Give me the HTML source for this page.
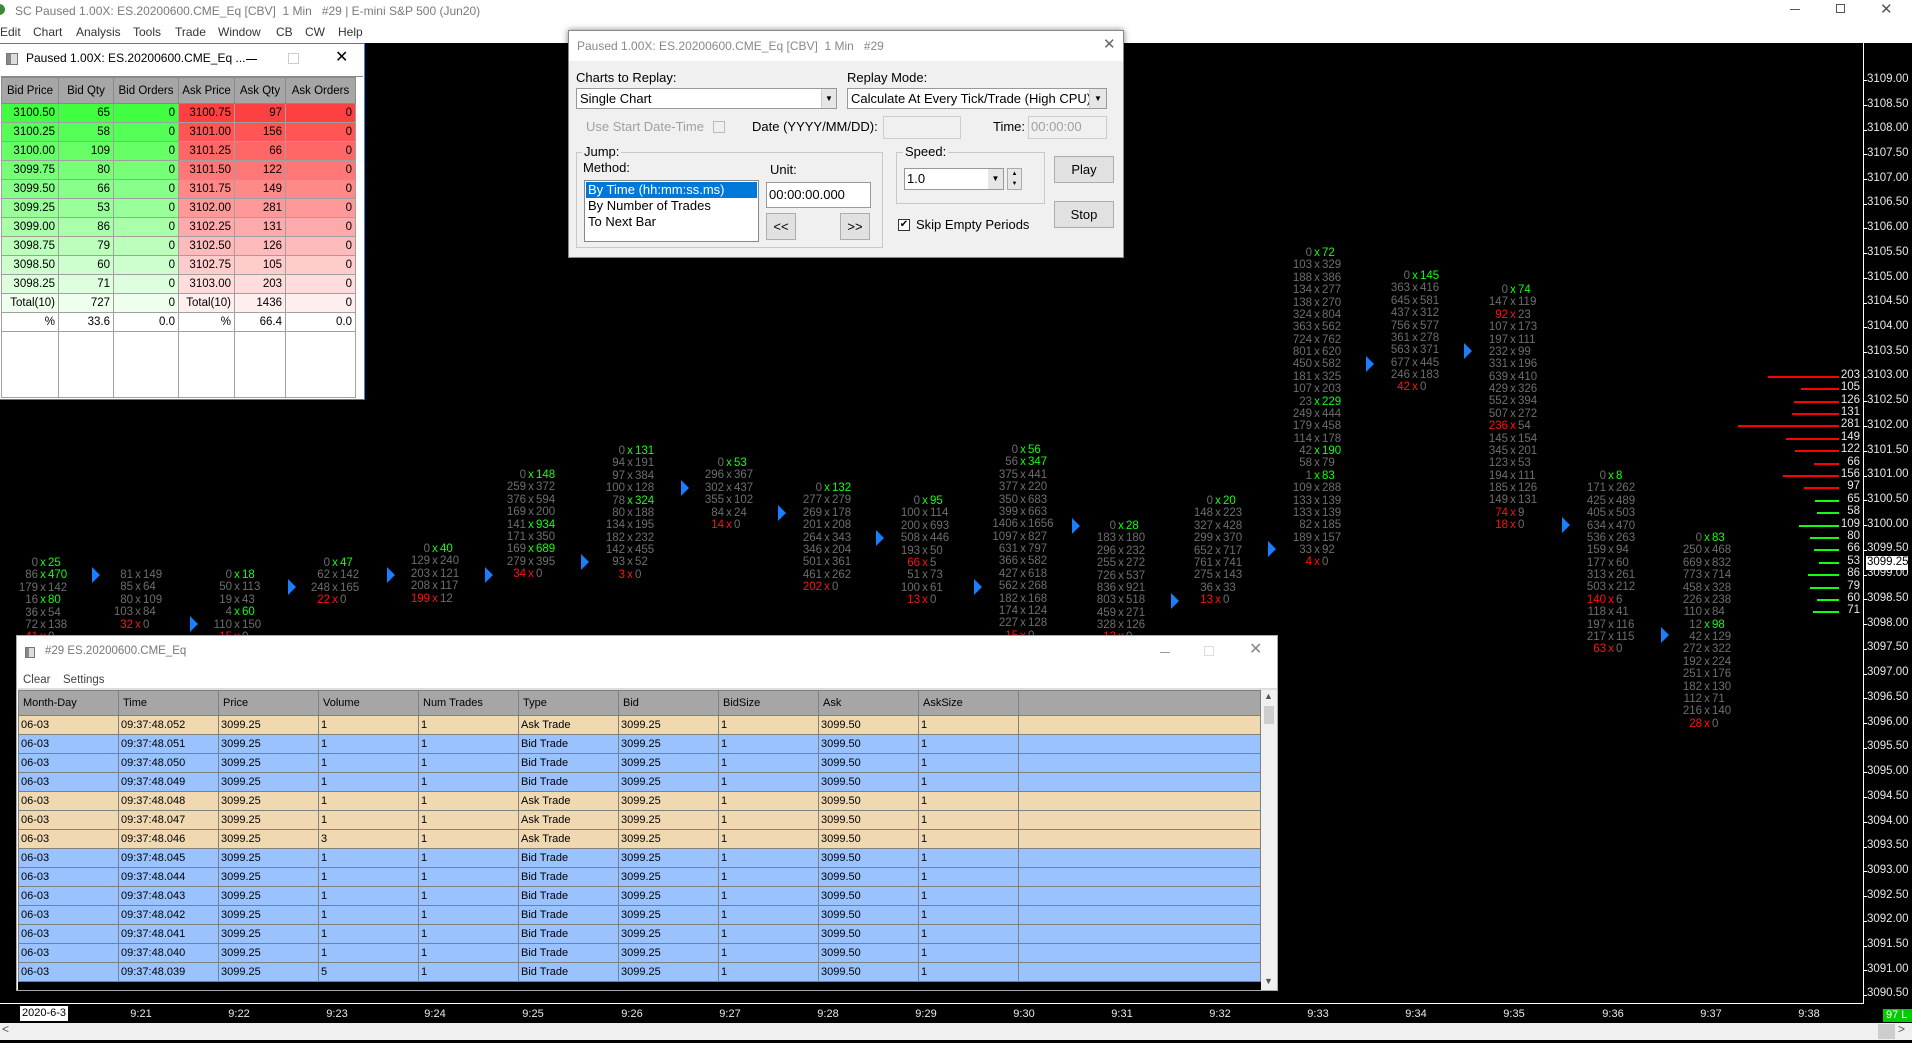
<!DOCTYPE html>
<html><head><meta charset="utf-8"><style>
*{box-sizing:border-box}
body{margin:0;width:1912px;height:1043px;overflow:hidden;background:#000;font-family:"Liberation Sans",sans-serif;position:relative}
.abs{position:absolute}
.col{position:absolute;font-size:11.5px;color:#6e6e6e;line-height:12.375px}
.col p{margin:0;height:12.375px;white-space:nowrap}
.col a{display:inline-block;width:40px;text-align:right}
.col b{display:inline-block;width:10px;text-align:center;font-weight:normal}
.col s{text-decoration:none}
.g b,.g s{color:#1f1}
.r a,.r b{color:#f11}
.arr{position:absolute;width:0;height:0;border-top:8px solid transparent;border-bottom:8px solid transparent;border-left:8px solid #1a7fff}
.pl{position:absolute;left:1867px;font-size:11.5px;color:#e8e8e8}
.tk{position:absolute;left:1863px;width:4px;height:1px;background:#fff}
.bar{position:absolute;height:2px}
.bn{position:absolute;width:40px;text-align:right;font-size:11.5px;color:#e8e8e8;left:1820px}
.ta{position:absolute;top:1008px;font-size:11px;color:#e8e8e8;width:40px;text-align:center}
table{border-collapse:collapse;table-layout:fixed}
.dom td{height:19px;border:1px solid #a0a0a0;font-size:11.5px;text-align:right;padding:0 3px;white-space:nowrap}
.dom th{height:26px;border:1px solid #8a8a8a;font-size:11.5px;font-weight:normal;background:#a6a6a6;padding:0 2px;white-space:nowrap}
.ts td{height:19px;border:1px solid #808080;font-size:11px;padding:0 2px;white-space:nowrap;overflow:hidden}
.ts th{height:25px;border:1px solid #808080;font-size:11px;font-weight:normal;background:#a6a6a6;text-align:left;padding:0 4px;white-space:nowrap}
.a td{background:#f0d8b0}.bd td{background:#99c2ff}
.btn{position:absolute;background:#e1e1e1;border:1px solid #adadad;font-size:13px;text-align:center}
.dl{position:absolute;font-size:13px;color:#000;white-space:nowrap}
.mn{position:absolute}
</style></head><body>

<!-- top title/menu -->
<div class="abs" style="left:0;top:0;width:1912px;height:43px;background:#fff"></div>
<div class="abs" style="left:-6px;top:4px;width:11px;height:11px;border-radius:50%;background:#3a8a3a"></div>
<div class="abs" style="left:15px;top:4px;font-size:12px;color:#7a7a7a;white-space:nowrap">SC Paused 1.00X: ES.20200600.CME_Eq [CBV]&nbsp; 1 Min &nbsp; #29 | E-mini S&amp;P 500 (Jun20)</div>
<div class="abs" style="left:1790px;top:9px;width:10px;height:1px;background:#555"></div>
<div class="abs" style="left:1836px;top:4px;width:9px;height:9px;border:1px solid #555"></div>
<div class="abs" style="left:1880px;top:0px;font-size:15px;color:#555">✕</div>
<div class="abs" style="left:0;top:25px;font-size:12px;color:#333;white-space:nowrap">
<span class="mn" style="left:0">Edit</span><span class="mn" style="left:33px">Chart</span><span class="mn" style="left:76px">Analysis</span><span class="mn" style="left:133px">Tools</span><span class="mn" style="left:175px">Trade</span><span class="mn" style="left:218px">Window</span><span class="mn" style="left:276px">CB</span><span class="mn" style="left:305px">CW</span><span class="mn" style="left:338px">Help</span></div>

<!-- price axis -->
<div class="abs" style="left:1863px;top:43px;width:1px;height:961px;background:#fff"></div>
<div class="tk" style="top:80px"></div><div class="pl" style="top:73px">3109.00</div>
<div class="tk" style="top:105px"></div><div class="pl" style="top:98px">3108.50</div>
<div class="tk" style="top:130px"></div><div class="pl" style="top:122px">3108.00</div>
<div class="tk" style="top:154px"></div><div class="pl" style="top:147px">3107.50</div>
<div class="tk" style="top:179px"></div><div class="pl" style="top:172px">3107.00</div>
<div class="tk" style="top:204px"></div><div class="pl" style="top:196px">3106.50</div>
<div class="tk" style="top:228px"></div><div class="pl" style="top:221px">3106.00</div>
<div class="tk" style="top:253px"></div><div class="pl" style="top:246px">3105.50</div>
<div class="tk" style="top:278px"></div><div class="pl" style="top:271px">3105.00</div>
<div class="tk" style="top:303px"></div><div class="pl" style="top:295px">3104.50</div>
<div class="tk" style="top:327px"></div><div class="pl" style="top:320px">3104.00</div>
<div class="tk" style="top:352px"></div><div class="pl" style="top:345px">3103.50</div>
<div class="tk" style="top:377px"></div><div class="pl" style="top:369px">3103.00</div>
<div class="tk" style="top:401px"></div><div class="pl" style="top:394px">3102.50</div>
<div class="tk" style="top:426px"></div><div class="pl" style="top:419px">3102.00</div>
<div class="tk" style="top:451px"></div><div class="pl" style="top:444px">3101.50</div>
<div class="tk" style="top:476px"></div><div class="pl" style="top:468px">3101.00</div>
<div class="tk" style="top:500px"></div><div class="pl" style="top:493px">3100.50</div>
<div class="tk" style="top:525px"></div><div class="pl" style="top:518px">3100.00</div>
<div class="tk" style="top:550px"></div><div class="pl" style="top:542px">3099.50</div>
<div class="tk" style="top:575px"></div><div class="pl" style="top:567px">3099.00</div>
<div class="abs" style="left:1866px;top:556px;width:42px;height:14px;background:#fff;color:#000;font-size:11.5px;padding-left:1px">3099.25</div>
<div class="tk" style="top:599px"></div><div class="pl" style="top:592px">3098.50</div>
<div class="tk" style="top:624px"></div><div class="pl" style="top:617px">3098.00</div>
<div class="tk" style="top:649px"></div><div class="pl" style="top:641px">3097.50</div>
<div class="tk" style="top:674px"></div><div class="pl" style="top:666px">3097.00</div>
<div class="tk" style="top:698px"></div><div class="pl" style="top:691px">3096.50</div>
<div class="tk" style="top:723px"></div><div class="pl" style="top:716px">3096.00</div>
<div class="tk" style="top:748px"></div><div class="pl" style="top:740px">3095.50</div>
<div class="tk" style="top:772px"></div><div class="pl" style="top:765px">3095.00</div>
<div class="tk" style="top:797px"></div><div class="pl" style="top:790px">3094.50</div>
<div class="tk" style="top:822px"></div><div class="pl" style="top:815px">3094.00</div>
<div class="tk" style="top:847px"></div><div class="pl" style="top:839px">3093.50</div>
<div class="tk" style="top:871px"></div><div class="pl" style="top:864px">3093.00</div>
<div class="tk" style="top:896px"></div><div class="pl" style="top:889px">3092.50</div>
<div class="tk" style="top:921px"></div><div class="pl" style="top:913px">3092.00</div>
<div class="tk" style="top:946px"></div><div class="pl" style="top:938px">3091.50</div>
<div class="tk" style="top:970px"></div><div class="pl" style="top:963px">3091.00</div>
<div class="tk" style="top:995px"></div><div class="pl" style="top:987px">3090.50</div>

<!-- DOM bars -->
<div class="bar" style="background:#f00;top:376px;left:1768px;width:71px"></div><div class="bn" style="top:369px">203</div>
<div class="bar" style="background:#f00;top:388px;left:1801px;width:38px"></div><div class="bn" style="top:381px">105</div>
<div class="bar" style="background:#f00;top:401px;left:1794px;width:45px"></div><div class="bn" style="top:394px">126</div>
<div class="bar" style="background:#f00;top:413px;left:1792px;width:47px"></div><div class="bn" style="top:406px">131</div>
<div class="bar" style="background:#f00;top:425px;left:1738px;width:101px"></div><div class="bn" style="top:418px">281</div>
<div class="bar" style="background:#f00;top:438px;left:1786px;width:53px"></div><div class="bn" style="top:431px">149</div>
<div class="bar" style="background:#f00;top:450px;left:1795px;width:44px"></div><div class="bn" style="top:443px">122</div>
<div class="bar" style="background:#f00;top:463px;left:1814px;width:25px"></div><div class="bn" style="top:456px">66</div>
<div class="bar" style="background:#f00;top:475px;left:1783px;width:56px"></div><div class="bn" style="top:468px">156</div>
<div class="bar" style="background:#f00;top:487px;left:1804px;width:35px"></div><div class="bn" style="top:480px">97</div>
<div class="bar" style="background:#1f1;top:500px;left:1815px;width:24px"></div><div class="bn" style="top:493px">65</div>
<div class="bar" style="background:#1f1;top:512px;left:1817px;width:22px"></div><div class="bn" style="top:505px">58</div>
<div class="bar" style="background:#1f1;top:525px;left:1799px;width:40px"></div><div class="bn" style="top:518px">109</div>
<div class="bar" style="background:#1f1;top:537px;left:1810px;width:29px"></div><div class="bn" style="top:530px">80</div>
<div class="bar" style="background:#1f1;top:549px;left:1814px;width:25px"></div><div class="bn" style="top:542px">66</div>
<div class="bar" style="background:#1f1;top:562px;left:1819px;width:20px"></div><div class="bn" style="top:555px">53</div>
<div class="bar" style="background:#1f1;top:574px;left:1808px;width:31px"></div><div class="bn" style="top:567px">86</div>
<div class="bar" style="background:#1f1;top:587px;left:1810px;width:29px"></div><div class="bn" style="top:580px">79</div>
<div class="bar" style="background:#1f1;top:599px;left:1817px;width:22px"></div><div class="bn" style="top:592px">60</div>
<div class="bar" style="background:#1f1;top:611px;left:1813px;width:26px"></div><div class="bn" style="top:604px">71</div>

<!-- footprint columns -->
<div class="col" style="left:-2px;top:557px"><p class="g"><a>0</a><b>x</b><s>25</s></p><p class="g"><a>86</a><b>x</b><s>470</s></p><p><a>179</a><b>x</b><s>142</s></p><p class="g"><a>16</a><b>x</b><s>80</s></p><p><a>36</a><b>x</b><s>54</s></p><p><a>72</a><b>x</b><s>138</s></p><p class="r"><a>41</a><b>x</b><s>0</s></p></div>
<div class="col" style="left:93px;top:569px"><p><a>81</a><b>x</b><s>149</s></p><p><a>85</a><b>x</b><s>64</s></p><p><a>80</a><b>x</b><s>109</s></p><p><a>103</a><b>x</b><s>84</s></p><p class="r"><a>32</a><b>x</b><s>0</s></p></div>
<div class="col" style="left:192px;top:569px"><p class="g"><a>0</a><b>x</b><s>18</s></p><p><a>50</a><b>x</b><s>113</s></p><p><a>19</a><b>x</b><s>43</s></p><p class="g"><a>4</a><b>x</b><s>60</s></p><p><a>110</a><b>x</b><s>150</s></p><p class="r"><a>15</a><b>x</b><s>0</s></p></div>
<div class="col" style="left:290px;top:557px"><p class="g"><a>0</a><b>x</b><s>47</s></p><p><a>62</a><b>x</b><s>142</s></p><p><a>248</a><b>x</b><s>165</s></p><p class="r"><a>22</a><b>x</b><s>0</s></p></div>
<div class="col" style="left:390px;top:543px"><p class="g"><a>0</a><b>x</b><s>40</s></p><p><a>129</a><b>x</b><s>240</s></p><p><a>203</a><b>x</b><s>121</s></p><p><a>208</a><b>x</b><s>117</s></p><p class="r"><a>199</a><b>x</b><s>12</s></p></div>
<div class="col" style="left:486px;top:469px"><p class="g"><a>0</a><b>x</b><s>148</s></p><p><a>259</a><b>x</b><s>372</s></p><p><a>376</a><b>x</b><s>594</s></p><p><a>169</a><b>x</b><s>200</s></p><p class="g"><a>141</a><b>x</b><s>934</s></p><p><a>171</a><b>x</b><s>350</s></p><p class="g"><a>169</a><b>x</b><s>689</s></p><p><a>279</a><b>x</b><s>395</s></p><p class="r"><a>34</a><b>x</b><s>0</s></p></div>
<div class="col" style="left:585px;top:445px"><p class="g"><a>0</a><b>x</b><s>131</s></p><p><a>94</a><b>x</b><s>191</s></p><p><a>97</a><b>x</b><s>384</s></p><p><a>100</a><b>x</b><s>128</s></p><p class="g"><a>78</a><b>x</b><s>324</s></p><p><a>80</a><b>x</b><s>188</s></p><p><a>134</a><b>x</b><s>195</s></p><p><a>182</a><b>x</b><s>232</s></p><p><a>142</a><b>x</b><s>455</s></p><p><a>93</a><b>x</b><s>52</s></p><p class="r"><a>3</a><b>x</b><s>0</s></p></div>
<div class="col" style="left:684px;top:457px"><p class="g"><a>0</a><b>x</b><s>53</s></p><p><a>296</a><b>x</b><s>367</s></p><p><a>302</a><b>x</b><s>437</s></p><p><a>355</a><b>x</b><s>102</s></p><p><a>84</a><b>x</b><s>24</s></p><p class="r"><a>14</a><b>x</b><s>0</s></p></div>
<div class="col" style="left:782px;top:482px"><p class="g"><a>0</a><b>x</b><s>132</s></p><p><a>277</a><b>x</b><s>279</s></p><p><a>269</a><b>x</b><s>178</s></p><p><a>201</a><b>x</b><s>208</s></p><p><a>264</a><b>x</b><s>343</s></p><p><a>346</a><b>x</b><s>204</s></p><p><a>501</a><b>x</b><s>361</s></p><p><a>461</a><b>x</b><s>262</s></p><p class="r"><a>202</a><b>x</b><s>0</s></p></div>
<div class="col" style="left:880px;top:495px"><p class="g"><a>0</a><b>x</b><s>95</s></p><p><a>100</a><b>x</b><s>114</s></p><p><a>200</a><b>x</b><s>693</s></p><p><a>508</a><b>x</b><s>446</s></p><p><a>193</a><b>x</b><s>50</s></p><p class="r"><a>66</a><b>x</b><s>5</s></p><p><a>51</a><b>x</b><s>73</s></p><p><a>100</a><b>x</b><s>61</s></p><p class="r"><a>13</a><b>x</b><s>0</s></p></div>
<div class="col" style="left:978px;top:444px"><p class="g"><a>0</a><b>x</b><s>56</s></p><p class="g"><a>56</a><b>x</b><s>347</s></p><p><a>375</a><b>x</b><s>441</s></p><p><a>377</a><b>x</b><s>220</s></p><p><a>350</a><b>x</b><s>683</s></p><p><a>399</a><b>x</b><s>663</s></p><p><a>1406</a><b>x</b><s>1656</s></p><p><a>1097</a><b>x</b><s>827</s></p><p><a>631</a><b>x</b><s>797</s></p><p><a>366</a><b>x</b><s>582</s></p><p><a>427</a><b>x</b><s>618</s></p><p><a>562</a><b>x</b><s>268</s></p><p><a>182</a><b>x</b><s>168</s></p><p><a>174</a><b>x</b><s>124</s></p><p><a>227</a><b>x</b><s>128</s></p><p class="r"><a>15</a><b>x</b><s>0</s></p></div>
<div class="col" style="left:1076px;top:520px"><p class="g"><a>0</a><b>x</b><s>28</s></p><p><a>183</a><b>x</b><s>180</s></p><p><a>296</a><b>x</b><s>232</s></p><p><a>255</a><b>x</b><s>272</s></p><p><a>726</a><b>x</b><s>537</s></p><p><a>836</a><b>x</b><s>921</s></p><p><a>803</a><b>x</b><s>518</s></p><p><a>459</a><b>x</b><s>271</s></p><p><a>328</a><b>x</b><s>126</s></p><p class="r"><a>13</a><b>x</b><s>0</s></p></div>
<div class="col" style="left:1173px;top:495px"><p class="g"><a>0</a><b>x</b><s>20</s></p><p><a>148</a><b>x</b><s>223</s></p><p><a>327</a><b>x</b><s>428</s></p><p><a>299</a><b>x</b><s>370</s></p><p><a>652</a><b>x</b><s>717</s></p><p><a>761</a><b>x</b><s>741</s></p><p><a>275</a><b>x</b><s>143</s></p><p><a>36</a><b>x</b><s>33</s></p><p class="r"><a>13</a><b>x</b><s>0</s></p></div>
<div class="col" style="left:1272px;top:247px"><p class="g"><a>0</a><b>x</b><s>72</s></p><p><a>103</a><b>x</b><s>329</s></p><p><a>188</a><b>x</b><s>386</s></p><p><a>134</a><b>x</b><s>277</s></p><p><a>138</a><b>x</b><s>270</s></p><p><a>324</a><b>x</b><s>804</s></p><p><a>363</a><b>x</b><s>562</s></p><p><a>724</a><b>x</b><s>762</s></p><p><a>801</a><b>x</b><s>620</s></p><p><a>450</a><b>x</b><s>582</s></p><p><a>181</a><b>x</b><s>325</s></p><p><a>107</a><b>x</b><s>203</s></p><p class="g"><a>23</a><b>x</b><s>229</s></p><p><a>249</a><b>x</b><s>444</s></p><p><a>179</a><b>x</b><s>458</s></p><p><a>114</a><b>x</b><s>178</s></p><p class="g"><a>42</a><b>x</b><s>190</s></p><p><a>58</a><b>x</b><s>79</s></p><p class="g"><a>1</a><b>x</b><s>83</s></p><p><a>109</a><b>x</b><s>288</s></p><p><a>133</a><b>x</b><s>139</s></p><p><a>133</a><b>x</b><s>139</s></p><p><a>82</a><b>x</b><s>185</s></p><p><a>189</a><b>x</b><s>157</s></p><p><a>33</a><b>x</b><s>92</s></p><p class="r"><a>4</a><b>x</b><s>0</s></p></div>
<div class="col" style="left:1370px;top:270px"><p class="g"><a>0</a><b>x</b><s>145</s></p><p><a>363</a><b>x</b><s>416</s></p><p><a>645</a><b>x</b><s>581</s></p><p><a>437</a><b>x</b><s>312</s></p><p><a>756</a><b>x</b><s>577</s></p><p><a>361</a><b>x</b><s>278</s></p><p><a>563</a><b>x</b><s>371</s></p><p><a>677</a><b>x</b><s>445</s></p><p><a>246</a><b>x</b><s>183</s></p><p class="r"><a>42</a><b>x</b><s>0</s></p></div>
<div class="col" style="left:1468px;top:284px"><p class="g"><a>0</a><b>x</b><s>74</s></p><p><a>147</a><b>x</b><s>119</s></p><p class="r"><a>92</a><b>x</b><s>23</s></p><p><a>107</a><b>x</b><s>173</s></p><p><a>197</a><b>x</b><s>111</s></p><p><a>232</a><b>x</b><s>99</s></p><p><a>331</a><b>x</b><s>196</s></p><p><a>639</a><b>x</b><s>410</s></p><p><a>429</a><b>x</b><s>326</s></p><p><a>552</a><b>x</b><s>394</s></p><p><a>507</a><b>x</b><s>272</s></p><p class="r"><a>236</a><b>x</b><s>54</s></p><p><a>145</a><b>x</b><s>154</s></p><p><a>345</a><b>x</b><s>201</s></p><p><a>123</a><b>x</b><s>53</s></p><p><a>194</a><b>x</b><s>111</s></p><p><a>185</a><b>x</b><s>126</s></p><p><a>149</a><b>x</b><s>131</s></p><p class="r"><a>74</a><b>x</b><s>9</s></p><p class="r"><a>18</a><b>x</b><s>0</s></p></div>
<div class="col" style="left:1566px;top:470px"><p class="g"><a>0</a><b>x</b><s>8</s></p><p><a>171</a><b>x</b><s>262</s></p><p><a>425</a><b>x</b><s>489</s></p><p><a>405</a><b>x</b><s>503</s></p><p><a>634</a><b>x</b><s>470</s></p><p><a>536</a><b>x</b><s>263</s></p><p><a>159</a><b>x</b><s>94</s></p><p><a>177</a><b>x</b><s>60</s></p><p><a>313</a><b>x</b><s>261</s></p><p><a>503</a><b>x</b><s>212</s></p><p class="r"><a>140</a><b>x</b><s>6</s></p><p><a>118</a><b>x</b><s>41</s></p><p><a>197</a><b>x</b><s>116</s></p><p><a>217</a><b>x</b><s>115</s></p><p class="r"><a>63</a><b>x</b><s>0</s></p></div>
<div class="col" style="left:1662px;top:532px"><p class="g"><a>0</a><b>x</b><s>83</s></p><p><a>250</a><b>x</b><s>468</s></p><p><a>669</a><b>x</b><s>832</s></p><p><a>773</a><b>x</b><s>714</s></p><p><a>458</a><b>x</b><s>328</s></p><p><a>226</a><b>x</b><s>238</s></p><p><a>110</a><b>x</b><s>84</s></p><p class="g"><a>12</a><b>x</b><s>98</s></p><p><a>42</a><b>x</b><s>129</s></p><p><a>272</a><b>x</b><s>322</s></p><p><a>192</a><b>x</b><s>224</s></p><p><a>251</a><b>x</b><s>176</s></p><p><a>182</a><b>x</b><s>130</s></p><p><a>112</a><b>x</b><s>71</s></p><p><a>216</a><b>x</b><s>140</s></p><p class="r"><a>28</a><b>x</b><s>0</s></p></div>

<!-- arrows -->
<div class="arr" style="left:92px;top:567px"></div>
<div class="arr" style="left:190px;top:616px"></div>
<div class="arr" style="left:288px;top:579px"></div>
<div class="arr" style="left:387px;top:567px"></div>
<div class="arr" style="left:485px;top:567px"></div>
<div class="arr" style="left:581px;top:554px"></div>
<div class="arr" style="left:681px;top:480px"></div>
<div class="arr" style="left:778px;top:505px"></div>
<div class="arr" style="left:876px;top:530px"></div>
<div class="arr" style="left:974px;top:579px"></div>
<div class="arr" style="left:1072px;top:518px"></div>
<div class="arr" style="left:1171px;top:593px"></div>
<div class="arr" style="left:1268px;top:541px"></div>
<div class="arr" style="left:1366px;top:356px"></div>
<div class="arr" style="left:1464px;top:343px"></div>
<div class="arr" style="left:1562px;top:517px"></div>
<div class="arr" style="left:1661px;top:627px"></div>

<!-- time axis -->
<div class="abs" style="left:0;top:1003px;width:1864px;height:1px;background:#fff"></div>
<div class="abs" style="left:20px;top:1006px;width:48px;height:15px;background:#fff;color:#000;font-size:11px;text-align:center;line-height:15px">2020-6-3</div>
<div class="ta" style="left:121px">9:21</div><div class="ta" style="left:219px">9:22</div><div class="ta" style="left:317px">9:23</div><div class="ta" style="left:415px">9:24</div><div class="ta" style="left:513px">9:25</div><div class="ta" style="left:612px">9:26</div><div class="ta" style="left:710px">9:27</div><div class="ta" style="left:808px">9:28</div><div class="ta" style="left:906px">9:29</div><div class="ta" style="left:1004px">9:30</div><div class="ta" style="left:1102px">9:31</div><div class="ta" style="left:1200px">9:32</div><div class="ta" style="left:1298px">9:33</div><div class="ta" style="left:1396px">9:34</div><div class="ta" style="left:1494px">9:35</div><div class="ta" style="left:1593px">9:36</div><div class="ta" style="left:1691px">9:37</div><div class="ta" style="left:1789px">9:38</div>
<div class="abs" style="left:1883px;top:1009px;width:29px;height:13px;background:#0c0;color:#fff;font-size:11px;line-height:13px;padding-left:3px">97 L</div>
<div class="abs" style="left:0;top:1023px;width:1912px;height:17px;background:#f0f0f0"></div>
<div class="abs" style="left:1878px;top:1024px;width:17px;height:15px;background:#cdcdcd"></div>
<div class="abs" style="left:1898px;top:1022px;font-size:12px;color:#555">&gt;</div>
<div class="abs" style="left:2px;top:1022px;font-size:12px;color:#555">&lt;</div>

<!-- DOM window -->
<div class="abs" style="left:0;top:43px;width:365px;height:357px;background:#fff;border:1px solid #3c7fd1;border-left:none">
 <div class="abs" style="left:6px;top:9px;width:12px;height:12px;border:1px solid #777;background:linear-gradient(90deg,#888 40%,#ddd 40%)"></div>
 <div class="abs" style="left:26px;top:7px;font-size:12px;color:#000;white-space:nowrap">Paused 1.00X: ES.20200600.CME_Eq ...</div>
 <div class="abs" style="left:246px;top:15px;width:11px;height:1px;background:#000"></div>
 <div class="abs" style="left:288px;top:9px;width:11px;height:11px;border:1px solid #ccc"></div>
 <div class="abs" style="left:335px;top:3px;font-size:16px;color:#000">✕</div>
 <div class="abs" style="left:1px;top:32px;width:362px;height:323px;background:#fff;border-top:1px solid #888">
 <table class="dom" style="width:354px">
 <colgroup><col style="width:57px"><col style="width:55px"><col style="width:65px"><col style="width:56px"><col style="width:51px"><col style="width:70px"></colgroup>
 <tr><th>Bid Price</th><th>Bid Qty</th><th>Bid Orders</th><th>Ask Price</th><th>Ask Qty</th><th>Ask Orders</th></tr>
 <tr><td style="background:#40ff40">3100.50</td><td style="background:#40ff40">65</td><td style="background:#40ff40">0</td><td style="background:#ff4040">3100.75</td><td style="background:#ff4040">97</td><td style="background:#ff4040">0</td></tr>
 <tr><td style="background:#55ff55">3100.25</td><td style="background:#55ff55">58</td><td style="background:#55ff55">0</td><td style="background:#ff5555">3101.00</td><td style="background:#ff5555">156</td><td style="background:#ff5555">0</td></tr>
 <tr><td style="background:#66ff66">3100.00</td><td style="background:#66ff66">109</td><td style="background:#66ff66">0</td><td style="background:#ff6666">3101.25</td><td style="background:#ff6666">66</td><td style="background:#ff6666">0</td></tr>
 <tr><td style="background:#77ff77">3099.75</td><td style="background:#77ff77">80</td><td style="background:#77ff77">0</td><td style="background:#ff7777">3101.50</td><td style="background:#ff7777">122</td><td style="background:#ff7777">0</td></tr>
 <tr><td style="background:#88ff88">3099.50</td><td style="background:#88ff88">66</td><td style="background:#88ff88">0</td><td style="background:#ff8888">3101.75</td><td style="background:#ff8888">149</td><td style="background:#ff8888">0</td></tr>
 <tr><td style="background:#99ff99">3099.25</td><td style="background:#99ff99">53</td><td style="background:#99ff99">0</td><td style="background:#ff9999">3102.00</td><td style="background:#ff9999">281</td><td style="background:#ff9999">0</td></tr>
 <tr><td style="background:#aaffaa">3099.00</td><td style="background:#aaffaa">86</td><td style="background:#aaffaa">0</td><td style="background:#ffaaaa">3102.25</td><td style="background:#ffaaaa">131</td><td style="background:#ffaaaa">0</td></tr>
 <tr><td style="background:#bbffbb">3098.75</td><td style="background:#bbffbb">79</td><td style="background:#bbffbb">0</td><td style="background:#ffbbbb">3102.50</td><td style="background:#ffbbbb">126</td><td style="background:#ffbbbb">0</td></tr>
 <tr><td style="background:#ccffcc">3098.50</td><td style="background:#ccffcc">60</td><td style="background:#ccffcc">0</td><td style="background:#ffcccc">3102.75</td><td style="background:#ffcccc">105</td><td style="background:#ffcccc">0</td></tr>
 <tr><td style="background:#ddffdd">3098.25</td><td style="background:#ddffdd">71</td><td style="background:#ddffdd">0</td><td style="background:#ffdddd">3103.00</td><td style="background:#ffdddd">203</td><td style="background:#ffdddd">0</td></tr>
 <tr><td style="background:#eeffee">Total(10)</td><td style="background:#eeffee">727</td><td style="background:#eeffee">0</td><td style="background:#ffeeee">Total(10)</td><td style="background:#ffeeee">1436</td><td style="background:#ffeeee">0</td></tr>
 <tr><td>%</td><td>33.6</td><td>0.0</td><td>%</td><td>66.4</td><td>0.0</td></tr>
 <tr><td style="height:66px"></td><td></td><td></td><td></td><td></td><td></td></tr>
 </table>
 </div>
</div>

<!-- Replay dialog -->
<div class="abs" style="left:568px;top:30px;width:556px;height:228px;background:#f0f0f0;border:1px solid #888;box-shadow:0 0 6px rgba(0,0,0,.5)">
 <div class="abs" style="left:0;top:0;width:554px;height:30px;background:#fff"></div>
 <div class="abs" style="left:8px;top:8px;font-size:12px;color:#888;white-space:nowrap">Paused 1.00X: ES.20200600.CME_Eq [CBV]&nbsp; 1 Min &nbsp; #29</div>
 <div class="abs" style="left:534px;top:4px;font-size:15px;color:#666">✕</div>
</div>
<div class="dl" style="left:576px;top:70px">Charts to Replay:</div>
<div class="abs" style="left:576px;top:88px;width:261px;height:21px;background:#fff;border:1px solid #999"></div>
<div class="dl" style="left:580px;top:91px">Single Chart</div>
<div class="abs" style="left:821px;top:89px;width:15px;height:19px;background:#e6e6e6;border-left:1px solid #ccc;font-size:8px;text-align:center;line-height:19px">▼</div>
<div class="dl" style="left:847px;top:70px">Replay Mode:</div>
<div class="abs" style="left:847px;top:88px;width:260px;height:21px;background:#fff;border:1px solid #999;overflow:hidden"><span style="position:absolute;left:3px;top:2px;font-size:13px;white-space:nowrap">Calculate At Every Tick/Trade (High CPU)</span></div>
<div class="abs" style="left:1089px;top:89px;width:17px;height:19px;background:#e6e6e6;border-left:1px solid #ccc;font-size:8px;text-align:center;line-height:19px">▼</div>
<div class="dl" style="left:586px;top:119px;color:#a0a0a0">Use Start Date-Time</div>
<div class="abs" style="left:713px;top:121px;width:12px;height:12px;border:1px solid #bbb;background:#f0f0f0"></div>
<div class="dl" style="left:752px;top:119px">Date (YYYY/MM/DD):</div>
<div class="abs" style="left:883px;top:116px;width:78px;height:23px;border:1px solid #ccc;background:#f0f0f0"></div>
<div class="dl" style="left:993px;top:119px">Time:</div>
<div class="abs" style="left:1028px;top:116px;width:79px;height:23px;border:1px solid #ccc;background:#f0f0f0"></div>
<div class="dl" style="left:1031px;top:119px;color:#a0a0a0">00:00:00</div>
<div class="abs" style="left:576px;top:152px;width:307px;height:96px;border:1px solid #c8c8c8"></div>
<div class="dl" style="left:582px;top:144px;background:#f0f0f0;padding:0 2px">Jump:</div>
<div class="dl" style="left:583px;top:160px">Method:</div>
<div class="abs" style="left:584px;top:180px;width:175px;height:62px;background:#fff;border:1px solid #888"></div>
<div class="abs" style="left:586px;top:182px;width:171px;height:16px;background:#0078d7"></div>
<div class="dl" style="left:588px;top:182px;color:#fff">By Time (hh:mm:ss.ms)</div>
<div class="dl" style="left:588px;top:198px">By Number of Trades</div>
<div class="dl" style="left:588px;top:214px">To Next Bar</div>
<div class="dl" style="left:770px;top:162px">Unit:</div>
<div class="abs" style="left:766px;top:182px;width:105px;height:26px;background:#fff;border:1px solid #999"></div>
<div class="dl" style="left:769px;top:187px">00:00:00.000</div>
<div class="btn" style="left:766px;top:213px;width:30px;height:27px;line-height:25px">&lt;&lt;</div>
<div class="btn" style="left:840px;top:213px;width:30px;height:27px;line-height:25px">&gt;&gt;</div>
<div class="abs" style="left:896px;top:152px;width:149px;height:52px;border:1px solid #c8c8c8"></div>
<div class="dl" style="left:903px;top:144px;background:#f0f0f0;padding:0 2px">Speed:</div>
<div class="abs" style="left:904px;top:168px;width:100px;height:22px;background:#fff;border:1px solid #999"></div>
<div class="dl" style="left:907px;top:171px">1.0</div>
<div class="abs" style="left:988px;top:169px;width:15px;height:20px;background:#e6e6e6;font-size:8px;text-align:center;line-height:20px">▼</div>
<div class="abs" style="left:1007px;top:168px;width:15px;height:22px;background:#e6e6e6;border:1px solid #aaa;font-size:6px;text-align:center;line-height:10px">▲<br>▼</div>
<div class="abs" style="left:898px;top:219px;width:12px;height:12px;background:#fff;border:1px solid #333;font-size:10px;line-height:10px;text-align:center">✔</div>
<div class="dl" style="left:916px;top:217px">Skip Empty Periods</div>
<div class="btn" style="left:1054px;top:156px;width:60px;height:27px;line-height:25px">Play</div>
<div class="btn" style="left:1054px;top:201px;width:60px;height:27px;line-height:25px">Stop</div>

<!-- Time & Sales window -->
<div class="abs" style="left:16px;top:635px;width:1262px;height:356px;background:#fff;border:1px solid #aaa">
 <div class="abs" style="left:8px;top:11px;width:10px;height:11px;border:1px solid #777;background:linear-gradient(90deg,#888 40%,#ddd 40%)"></div>
 <div class="abs" style="left:28px;top:9px;font-size:11.5px;color:#777;white-space:nowrap">#29 ES.20200600.CME_Eq</div>
 <div class="abs" style="left:1143px;top:16px;width:10px;height:1px;background:#999"></div>
 <div class="abs" style="left:1187px;top:10px;width:10px;height:10px;border:1px solid #ddd"></div>
 <div class="abs" style="left:1232px;top:3px;font-size:16px;color:#888">✕</div>
 <div class="abs" style="left:6px;top:38px;font-size:11.5px;color:#444">Clear</div>
 <div class="abs" style="left:46px;top:38px;font-size:11.5px;color:#444">Settings</div>
 <div class="abs" style="left:1px;top:52px;width:1259px;height:302px;background:#000;border-top:2px solid #ddd"></div>
 <div class="abs" style="left:1px;top:54px;width:1243px;height:300px;overflow:hidden">
 <table class="ts" style="width:1243px">
 <colgroup><col style="width:100px"><col style="width:100px"><col style="width:100px"><col style="width:100px"><col style="width:100px"><col style="width:100px"><col style="width:100px"><col style="width:100px"><col style="width:100px"><col style="width:100px"><col></colgroup>
 <tr><th>Month-Day</th><th>Time</th><th>Price</th><th>Volume</th><th>Num Trades</th><th>Type</th><th>Bid</th><th>BidSize</th><th>Ask</th><th>AskSize</th><th></th></tr>
 <tr class="a"><td>06-03</td><td>09:37:48.052</td><td>3099.25</td><td>1</td><td>1</td><td>Ask Trade</td><td>3099.25</td><td>1</td><td>3099.50</td><td>1</td><td></td></tr>
 <tr class="bd"><td>06-03</td><td>09:37:48.051</td><td>3099.25</td><td>1</td><td>1</td><td>Bid Trade</td><td>3099.25</td><td>1</td><td>3099.50</td><td>1</td><td></td></tr>
 <tr class="bd"><td>06-03</td><td>09:37:48.050</td><td>3099.25</td><td>1</td><td>1</td><td>Bid Trade</td><td>3099.25</td><td>1</td><td>3099.50</td><td>1</td><td></td></tr>
 <tr class="bd"><td>06-03</td><td>09:37:48.049</td><td>3099.25</td><td>1</td><td>1</td><td>Bid Trade</td><td>3099.25</td><td>1</td><td>3099.50</td><td>1</td><td></td></tr>
 <tr class="a"><td>06-03</td><td>09:37:48.048</td><td>3099.25</td><td>1</td><td>1</td><td>Ask Trade</td><td>3099.25</td><td>1</td><td>3099.50</td><td>1</td><td></td></tr>
 <tr class="a"><td>06-03</td><td>09:37:48.047</td><td>3099.25</td><td>1</td><td>1</td><td>Ask Trade</td><td>3099.25</td><td>1</td><td>3099.50</td><td>1</td><td></td></tr>
 <tr class="a"><td>06-03</td><td>09:37:48.046</td><td>3099.25</td><td>3</td><td>1</td><td>Ask Trade</td><td>3099.25</td><td>1</td><td>3099.50</td><td>1</td><td></td></tr>
 <tr class="bd"><td>06-03</td><td>09:37:48.045</td><td>3099.25</td><td>1</td><td>1</td><td>Bid Trade</td><td>3099.25</td><td>1</td><td>3099.50</td><td>1</td><td></td></tr>
 <tr class="bd"><td>06-03</td><td>09:37:48.044</td><td>3099.25</td><td>1</td><td>1</td><td>Bid Trade</td><td>3099.25</td><td>1</td><td>3099.50</td><td>1</td><td></td></tr>
 <tr class="bd"><td>06-03</td><td>09:37:48.043</td><td>3099.25</td><td>1</td><td>1</td><td>Bid Trade</td><td>3099.25</td><td>1</td><td>3099.50</td><td>1</td><td></td></tr>
 <tr class="bd"><td>06-03</td><td>09:37:48.042</td><td>3099.25</td><td>1</td><td>1</td><td>Bid Trade</td><td>3099.25</td><td>1</td><td>3099.50</td><td>1</td><td></td></tr>
 <tr class="bd"><td>06-03</td><td>09:37:48.041</td><td>3099.25</td><td>1</td><td>1</td><td>Bid Trade</td><td>3099.25</td><td>1</td><td>3099.50</td><td>1</td><td></td></tr>
 <tr class="bd"><td>06-03</td><td>09:37:48.040</td><td>3099.25</td><td>1</td><td>1</td><td>Bid Trade</td><td>3099.25</td><td>1</td><td>3099.50</td><td>1</td><td></td></tr>
 <tr class="bd"><td>06-03</td><td>09:37:48.039</td><td>3099.25</td><td>5</td><td>1</td><td>Bid Trade</td><td>3099.25</td><td>1</td><td>3099.50</td><td>1</td><td></td></tr>
 </table>
 </div>
 <div class="abs" style="left:1244px;top:54px;width:16px;height:300px;background:#f0f0f0"></div>
 <div class="abs" style="left:1247px;top:55px;font-size:9px;color:#555">▲</div>
 <div class="abs" style="left:1247px;top:70px;width:10px;height:18px;background:#cdcdcd"></div>
 <div class="abs" style="left:1247px;top:340px;font-size:9px;color:#555">▼</div>
</div>
</body></html>
